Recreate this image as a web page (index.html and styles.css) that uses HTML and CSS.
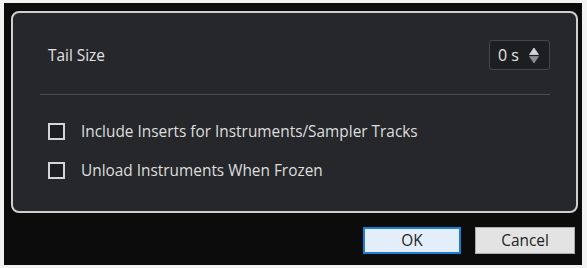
FILE: index.html
```html
<!DOCTYPE html>
<html>
<head>
<meta charset="utf-8">
<link rel="stylesheet" href="styles.css">
</head>
<body>
<div class="window">
  <div class="panel">
    <div class="row tail">
      <span class="label">Tail Size</span>
      <div class="spin">
        <span class="val">0 s</span>
        <svg class="arrows" width="10" height="17" viewBox="0 0 10 17">
          <path d="M5 1 L9.5 7.5 L0.5 7.5 Z" fill="#d6d6d6" stroke="#d6d6d6" stroke-width="0.8" stroke-linejoin="round"/>
          <path d="M5 16 L9.5 9.5 L0.5 9.5 Z" fill="#8c8c8c" stroke="#8c8c8c" stroke-width="0.8" stroke-linejoin="round"/>
        </svg>
      </div>
    </div>
    <div class="sep"></div>
    <div class="checks">
      <label class="check"><span class="box"></span><span class="ctext">Include Inserts for Instruments/Sampler Tracks</span></label>
      <label class="check"><span class="box"></span><span class="ctext">Unload Instruments When Frozen</span></label>
    </div>
  </div>
  <div class="buttons">
    <button class="btn ok">OK</button>
    <button class="btn cancel">Cancel</button>
  </div>
</div>
</body>
</html>
```

FILE: styles.css
```css
html, body {
  margin: 0;
  padding: 0;
  background: #f2f2f2;
  width: 587px;
  height: 268px;
  overflow: hidden;
}
.window {
  box-sizing: border-box;
  margin: 3px 0 0 4px;
  width: 578px;
  height: 262px;
  background: #0c0c0c;
  padding: 8px 0 0 7px;
  font-family: "Open Sans", "Noto Sans", sans-serif;
}
.panel {
  box-sizing: border-box;
  width: 567px;
  height: 202px;
  border: 2px solid #cfcfcf;
  border-radius: 8px;
  background: #25272b;
  padding: 27px 26px 0 27px;
  display: flex;
  flex-direction: column;
}
.row.tail {
  display: flex;
  align-items: center;
  justify-content: space-between;
  height: 30px;
  padding-left: 8px;
}
.label {
  color: #e2e2e2;
  font-size: 15.4px;
}
.spin {
  box-sizing: border-box;
  width: 61px;
  height: 30px;
  border: 1px solid #45474c;
  border-radius: 3px;
  background: #1d1e21;
  display: flex;
  align-items: center;
  padding-left: 8px;
  gap: 10px;
}
.val {
  color: #e6e6e6;
  font-size: 16px;
}
.sep {
  height: 1px;
  background: #4a4c51;
  margin-top: 24px;
}
.checks {
  display: flex;
  flex-direction: column;
  gap: 19px;
  margin-top: 26px;
  padding-left: 8px;
}
.check {
  display: flex;
  align-items: center;
  height: 20px;
  gap: 16px;
}
.box {
  box-sizing: border-box;
  width: 17px;
  height: 17px;
  border: 2px solid #d4d4d4;
  background: #1c1d20;
}
.ctext {
  color: #dedede;
  font-size: 15.4px;
}
.buttons {
  display: flex;
  justify-content: flex-end;
  gap: 14px;
  margin-top: 14px;
  padding-right: 7px;
}
.btn {
  box-sizing: border-box;
  height: 27px;
  font-family: "Open Sans", "Noto Sans", sans-serif;
  font-size: 15.4px;
  color: #222;
  padding: 0;
}
.ok {
  width: 98px;
  background: #e4eef8;
  border: 2px solid #1a7fd4;
}
.cancel {
  width: 100px;
  background: #e3e3e3;
  border: 1px solid #adadad;
}
```
